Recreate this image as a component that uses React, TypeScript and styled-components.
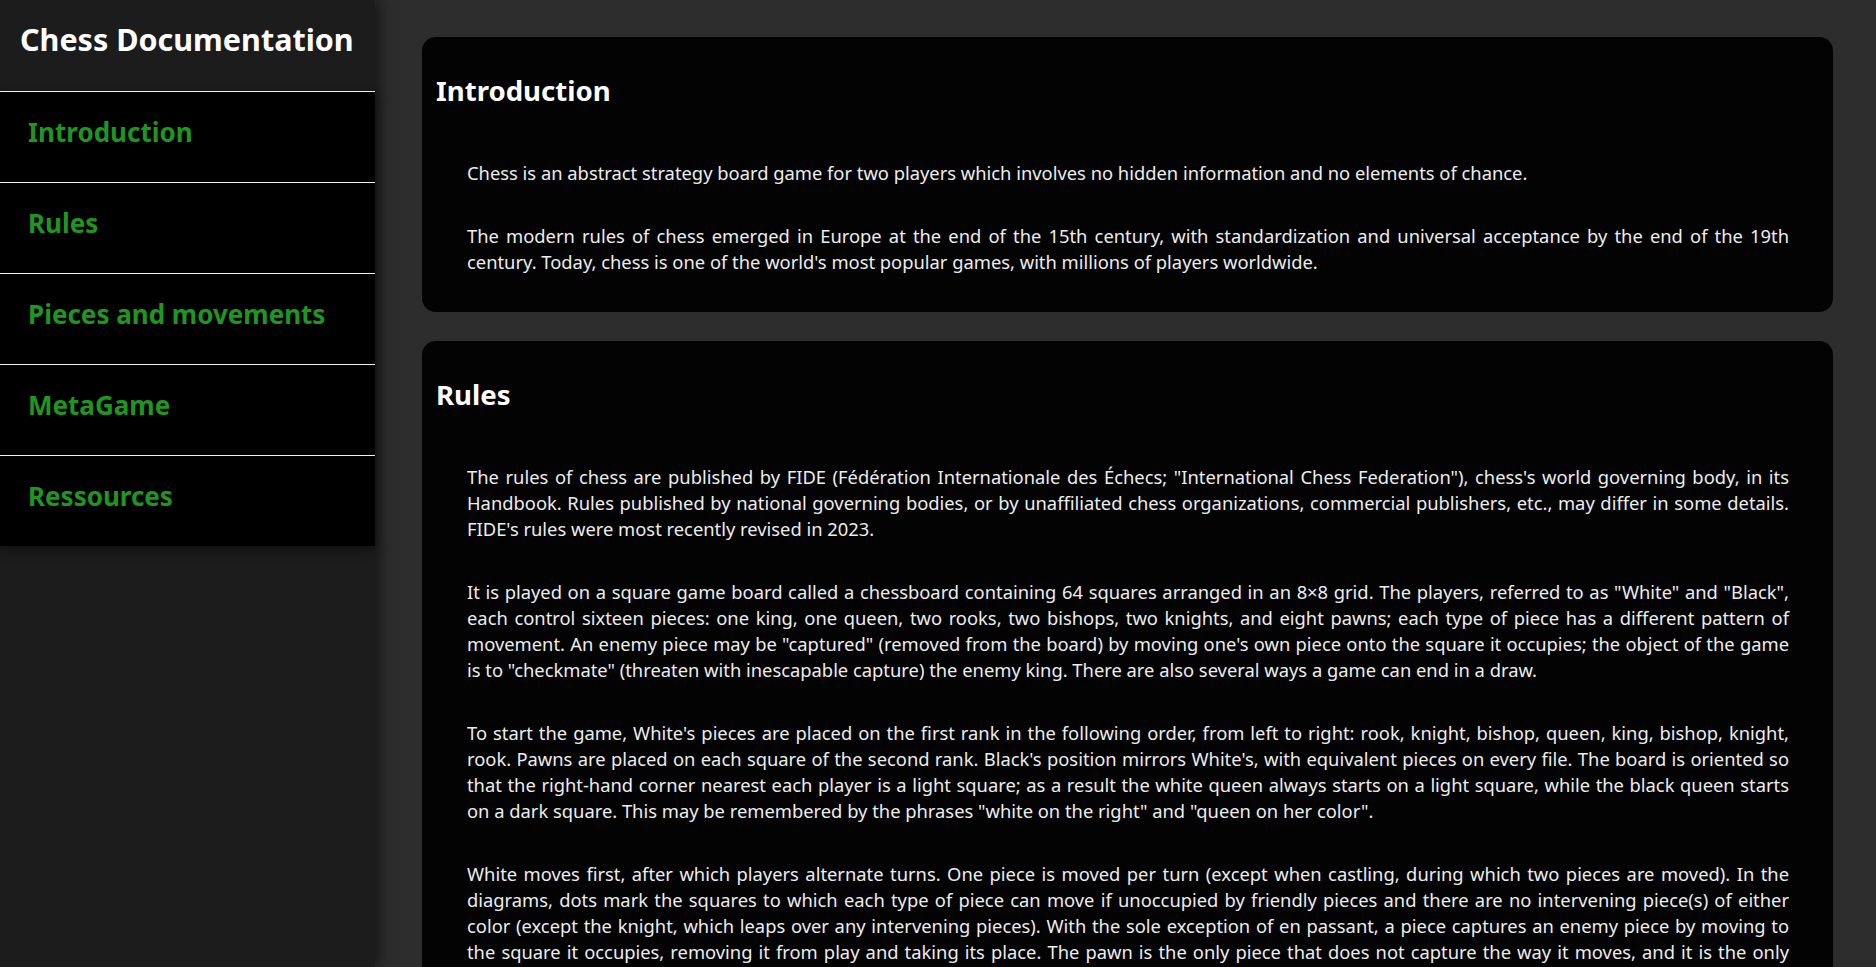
import React from "react";
import styled, { createGlobalStyle } from "styled-components";

const GlobalStyle = createGlobalStyle`
  html, body {
    margin: 0;
    padding: 0;
    height: 100%;
    overflow: hidden;
    background: #2d2d2d;
    font-family: "Noto Sans", "Open Sans", sans-serif;
  }
  #root { height: 100%; }
  * { box-sizing: border-box; }
`;

const Layout = styled.div`
  display: flex;
  height: 100vh;
  background: #2d2d2d;
`;

const Sidebar = styled.aside`
  flex: 0 0 375px;
  width: 375px;
  height: 100%;
  background: #1c1c1c;
  display: flex;
  flex-direction: column;
  box-shadow: 4px 0 14px rgba(0, 0, 0, 0.55);
  position: relative;
  z-index: 2;
`;

const SiteTitle = styled.h1`
  margin: 0;
  padding: 18px 20px 30px;
  height: 91px;
  font-size: 30.5px;
  line-height: 43px;
  font-weight: 700;
  color: #ffffff;
  white-space: nowrap;
`;

const Nav = styled.nav`
  display: flex;
  flex-direction: column;
  background: #000000;
  box-shadow: 0 4px 10px rgba(0, 0, 0, 0.45);
`;

const NavLink = styled.a`
  display: block;
  height: 91px;
  border-top: 1px solid #f2f2f2;
  padding: 22px 28px 0;
  font-size: 26px;
  line-height: 36px;
  font-weight: 700;
  color: #1f961f;
  text-decoration: none;
  cursor: pointer;
`;

const Main = styled.main`
  flex: 1;
  height: 100%;
  overflow: hidden;
  padding: 37px 43px 0 47px;
  display: flex;
  flex-direction: column;
  gap: 29px;
`;

const Card = styled.section`
  background: #030303;
  border-radius: 14px;
  padding: 35px 44px 37px 14px;
  flex-shrink: 0;
`;

const CardTitle = styled.h2`
  margin: 0 0 51px;
  font-size: 27.6px;
  line-height: 37px;
  font-weight: 700;
  color: #ffffff;
`;

const CardBody = styled.div`
  padding-left: 31px;
  display: flex;
  flex-direction: column;
  gap: 37px;
`;

const Paragraph = styled.p`
  margin: 0;
  font-size: 18.35px;
  line-height: 26px;
  color: #ededed;
  text-align: justify;
`;

const sections: { id: string; title: string; paragraphs: string[] }[] = [
  {
    id: "intro",
    title: "Introduction",
    paragraphs: [
      "Chess is an abstract strategy board game for two players which involves no hidden information and no elements of chance.",
      "The modern rules of chess emerged in Europe at the end of the 15th century, with standardization and universal acceptance by the end of the 19th century. Today, chess is one of the world's most popular games, with millions of players worldwide.",
    ],
  },
  {
    id: "rules",
    title: "Rules",
    paragraphs: [
      "The rules of chess are published by FIDE (Fédération Internationale des Échecs; \"International Chess Federation\"), chess's world governing body, in its Handbook. Rules published by national governing bodies, or by unaffiliated chess organizations, commercial publishers, etc., may differ in some details. FIDE's rules were most recently revised in 2023.",
      "It is played on a square game board called a chessboard containing 64 squares arranged in an 8×8 grid. The players, referred to as \"White\" and \"Black\", each control sixteen pieces: one king, one queen, two rooks, two bishops, two knights, and eight pawns; each type of piece has a different pattern of movement. An enemy piece may be \"captured\" (removed from the board) by moving one's own piece onto the square it occupies; the object of the game is to \"checkmate\" (threaten with inescapable capture) the enemy king. There are also several ways a game can end in a draw.",
      "To start the game, White's pieces are placed on the first rank in the following order, from left to right: rook, knight, bishop, queen, king, bishop, knight, rook. Pawns are placed on each square of the second rank. Black's position mirrors White's, with equivalent pieces on every file. The board is oriented so that the right-hand corner nearest each player is a light square; as a result the white queen always starts on a light square, while the black queen starts on a dark square. This may be remembered by the phrases \"white on the right\" and \"queen on her color\".",
      "White moves first, after which players alternate turns. One piece is moved per turn (except when castling, during which two pieces are moved). In the diagrams, dots mark the squares to which each type of piece can move if unoccupied by friendly pieces and there are no intervening piece(s) of either color (except the knight, which leaps over any intervening pieces). With the sole exception of en passant, a piece captures an enemy piece by moving to the square it occupies, removing it from play and taking its place. The pawn is the only piece that does not capture the way it moves, and it is the only piece that moves and captures only forward. A piece is said to control empty squares on which it could capture, attack squares with enemy pieces it could capture, and defend squares with pieces of the same color on which it could recapture. Moving is compulsory; a player may not skip a turn, even when having to move is detrimental.",
    ],
  },
];

const navItems = ["Introduction", "Rules", "Pieces and movements", "MetaGame", "Ressources"];

export default function App() {
  return (
    <>
      <GlobalStyle />
      <Layout>
        <Sidebar>
          <SiteTitle>Chess Documentation</SiteTitle>
          <Nav>
            {navItems.map((item) => (
              <NavLink key={item}>{item}</NavLink>
            ))}
          </Nav>
        </Sidebar>
        <Main>
          {sections.map((s) => (
            <Card key={s.id} id={s.id}>
              <CardTitle>{s.title}</CardTitle>
              <CardBody>
                {s.paragraphs.map((p, i) => (
                  <Paragraph key={i}>{p}</Paragraph>
                ))}
              </CardBody>
            </Card>
          ))}
        </Main>
      </Layout>
    </>
  );
}
